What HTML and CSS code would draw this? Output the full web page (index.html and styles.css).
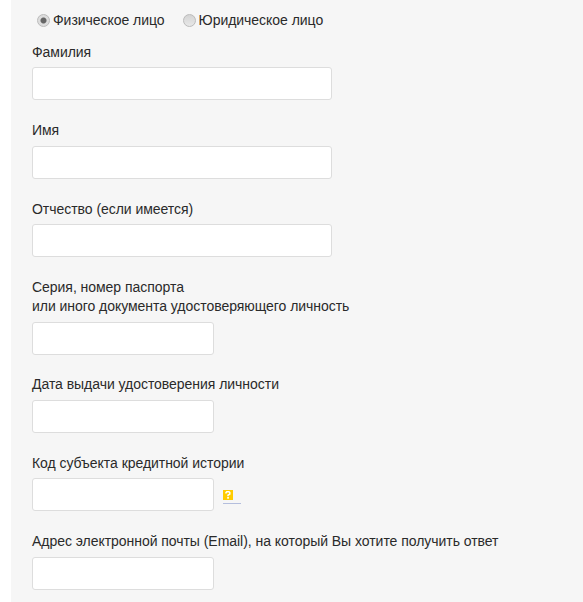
FILE: index.html
```html
<!DOCTYPE html>
<html lang="ru">
  <head>
    <meta charset="UTF-8" />
    <title>Форма</title>
    <link rel="stylesheet" href="styles.css">
  </head>
  <body>
    <form class="panel">
      <div class="person-type">
        <label class="radio-label"><input type="radio" name="person" checked /> Физическое лицо</label>
        <label class="radio-label"><input type="radio" name="person" /> Юридическое лицо</label>
      </div>

      <div class="field">
        <label>Фамилия</label>
        <input class="wide" type="text" />
      </div>
      <div class="field loose">
        <label>Имя</label>
        <input class="wide" type="text" />
      </div>
      <div class="field">
        <label>Отчество (если имеется)</label>
        <input class="wide" type="text" />
      </div>
      <div class="field passport">
        <label class="two-lines">Серия, номер паспорта<br />или иного документа удостоверяющего личность</label>
        <input class="short" type="text" />
      </div>
      <div class="field loose">
        <label>Дата выдачи удостоверения личности</label>
        <input class="short" type="text" />
      </div>
      <div class="field">
        <label>Код субъекта кредитной истории</label>
        <div class="input-row">
          <input class="short" type="text" />
          <a class="help" href="#">
            <svg width="10" height="10" viewBox="0 0 10 10">
              <rect width="10" height="10" fill="#fc0" />
              <path d="M3 3.6V2.6L3.8 1.8H6L6.8 2.6V4L5 5.2V6.2" fill="none" stroke="#fff" stroke-width="1.5" />
              <rect x="4.2" y="7" width="1.7" height="1.7" fill="#fff" />
            </svg>
          </a>
        </div>
      </div>
      <div class="field loose">
        <label>Адрес электронной почты (Email), на который Вы хотите получить ответ</label>
        <input class="short" type="text" />
      </div>
    </form>
  </body>
</html>
```

FILE: styles.css
```css
* {
  box-sizing: border-box;
  font-family: "Liberation Sans", Arial, sans-serif;
}

html,
body {
  margin: 0;
  padding: 0;
  background-color: #fff;
}

.panel {
  height: 602px;
  margin-left: 11px;
  padding: 10px 0 0 21px;
  background-color: #f6f6f6;
  color: #2a2a2a;
  font-size: 14px;
  line-height: 20px;
  letter-spacing: -0.04px;
  overflow: hidden;
}

.person-type {
  display: flex;
  gap: 18px;
  padding-left: 5px;
  margin-bottom: 12px;
}

.radio-label {
  display: flex;
  align-items: center;
  gap: 3px;
}

.radio-label input {
  appearance: none;
  width: 13px;
  height: 13px;
  margin: 0;
  background: linear-gradient(#d4d4d4, #e8e8e8);
  border: 1px solid #bbb;
  border-radius: 50%;
}

.radio-label input:checked {
  background: radial-gradient(circle, #666 0, #666 2.5px, #ddd 3.5px);
}

.field {
  margin-bottom: 20px;
}

.field label {
  display: block;
  margin-bottom: 5px;
}

.field.loose label {
  margin-bottom: 6px;
}

.field.passport {
  margin-bottom: 19px;
}

.field label.two-lines {
  line-height: 19px;
  padding-top: 1px;
  margin-bottom: 6px;
}

.field input {
  display: block;
  height: 33px;
  background-color: #fff;
  border: 1px solid #ddd;
  border-radius: 3px;
}

.wide {
  width: 300px;
}

.short {
  width: 182px;
}

.input-row {
  display: flex;
  align-items: flex-start;
  gap: 9px;
}

.help {
  display: block;
  width: 18px;
  height: 14px;
  margin-top: 12px;
  border-bottom: 1px solid #b4bedd;
}

.help svg {
  display: block;
}
```
